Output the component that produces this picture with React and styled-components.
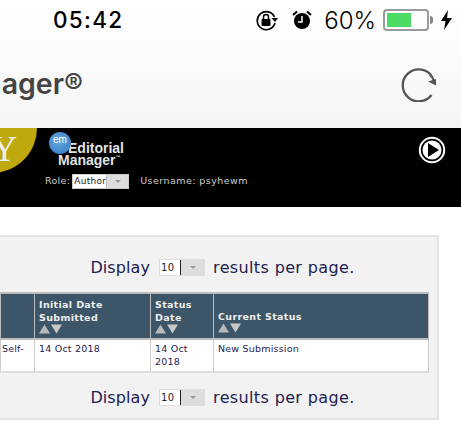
import React from "react";
import styled, { createGlobalStyle } from "styled-components";

const Global = createGlobalStyle`
  html, body { margin: 0; padding: 0; background: #fff; }
  body { width: 461px; height: 424px; overflow: hidden; font-family: "DejaVu Sans", Verdana, sans-serif; }
`;
const Page = styled.div`width: 461px; height: 424px; overflow: hidden; display: flex; flex-direction: column; background: #fff;`;
const Chrome = styled.header`
  height: 128px; flex: none; display: flex; flex-direction: column;
  background: linear-gradient(#ffffff 0%, #fbfbfb 45%, #f5f5f5 100%);
`;
const StatusBar = styled.div`
  height: 40px; display: flex; align-items: center; justify-content: space-between;
  padding: 0 9px 0 53px; color: #000; font-family: Inter, "Liberation Sans", sans-serif;
`;
const Clock = styled.span`font-size: 22.5px; font-weight: 500; letter-spacing: 1.3px; line-height: 40px;`;
const StatusIcons = styled.div`display: flex; align-items: center;`;
const Percent = styled.span`font-size: 24px; font-weight: 300; margin: 0 7px 0 12px; font-family: Inter, sans-serif;`;
const Battery = styled.div`
  position: relative; width: 46px; height: 22px; border: 2px solid #999; border-radius: 4px; padding: 2px; margin-right: 3px; box-sizing: border-box;
  &::after { content: ""; position: absolute; right: -6px; top: 5px; width: 3px; height: 8px; background: #888; border-radius: 0 3px 3px 0; }
`;
const BatteryFill = styled.div`width: 24px; height: 100%; background: #4cd964;`;
const IconSlot = styled.svg`display: block; flex: none; margin-left: ${p => p.$ml || 0}px;`;
const NavBar = styled.div`flex: 1; display: flex; align-items: flex-start; justify-content: space-between; padding-right: 24px; min-height: 0;`;
const TitleClip = styled.div`
  width: 83px; overflow: hidden; display: flex; justify-content: flex-end; margin-top: 26px;
`;
const Title = styled.span`
  font-family: Inter, "Liberation Sans", sans-serif; font-size: 28.5px; font-weight: 600; color: #444; white-space: nowrap; line-height: 36px;
`;
const Reload = styled.svg`display: block; margin-top: 26px;`;
const Banner = styled.div`position: relative; height: 79px; box-sizing: border-box; overflow: hidden; background: #000; padding: 4px 0 0 45px; flex: none;`;
const Seal = styled.div`
  position: absolute; left: -53px; top: -45px; width: 90px; height: 90px; border-radius: 50%; background: #bfa80d;
  display: flex; align-items: flex-end; justify-content: flex-end; padding: 0 20px 6px 0; box-sizing: border-box;
  color: #eee; font: 35px/1 "Liberation Serif", serif;
`;
const Logo = styled.div`position: relative; height: 40px; color: #e2e2e2; font: bold 14px/12px "Liberation Sans", sans-serif;`;
const LogoBall = styled.div`
  position: absolute; left: 4px; top: 0; width: 22px; height: 22px; border-radius: 50%;
  background: radial-gradient(circle at 45% 40%, #66a9e0, #2f78c4);
  color: #fff; font: 10px/15px "Liberation Sans", sans-serif; text-align: center;
`;
const LogoLines = styled.div`
  padding: 10px 0 0 13px;
  & > div:first-child { padding-left: 10px; }
  sup { font-size: 5px; line-height: 0; vertical-align: 6px; }
`;
const RoleRow = styled.div`display: flex; align-items: center; height: 16px; font-size: 9.5px; letter-spacing: .3px; color: #ccc;`;
const Username = styled.span`margin-left: 11px; letter-spacing: .45px;`;
const Select = styled.div`
  display: flex; align-items: stretch; background: #fff; box-sizing: border-box; color: #222; flex: none;
  width: ${p => p.$w}px; height: ${p => p.$h}px; margin: ${p => p.$m || 0};
  border: 1px solid ${p => p.$dark ? "#ddd" : "#ccc"};
  font-size: ${p => p.$fs}px; line-height: ${p => p.$h - 2}px;
`;
const SelectValue = styled.span`flex: 1; padding-left: 1px;`;
const SelectArrow = styled.span`
  width: ${p => p.$w}px; background: #ddd; display: flex; align-items: center; justify-content: center; border-left: ${p => p.$bar ? "1px solid #222" : "1px solid #bbb"};
  &::after { content: ""; border: 3.5px solid transparent; border-top: 3.5px solid #999; border-bottom: 0; }
`;
const PlayBtn = styled.svg`position: absolute; right: 15px; top: 8px;`;
const Gap = styled.div`height: 28px; flex: none;`;
const Panel = styled.section`
  width: 439px; height: 185px; box-sizing: border-box; flex: none; background: #f2f2f2;
  border: 2px solid #e4e4e4; border-left: 0; display: flex; flex-direction: column; align-items: center;
`;
const Pager = styled.div`
  width: 428px; height: ${p => p.$h}px; display: flex; align-items: center; justify-content: center; align-self: flex-start; flex: none;
  font-size: 16px; color: #1c2150; letter-spacing: .36px; padding: ${p => p.$top || 0}px 0 0 17px; box-sizing: border-box;
`;
const PagerLabel = styled.span`letter-spacing: .1px;`;
const TableWrap = styled.table`
  width: 428px; table-layout: fixed; border-collapse: collapse; align-self: flex-start; flex: none; font-size: 9.5px; background: #fff; color: #1c2150;
`;
const HeadCell = styled.th`
  background: #3c5568; color: #eee; font-size: 9.5px; font-weight: bold; text-align: left; vertical-align: top; letter-spacing: .35px;
  border: 1px solid #bbb; border-top: 2px solid #bbb; border-bottom: 2px solid #bbb; padding: ${p => p.$pad ? 16 : 4}px 0 0 4px; line-height: 13px; height: 46px; box-sizing: border-box;
`;
const Cell = styled.td`
  border: 1px solid #ccc; border-bottom: 2px solid #ddd; padding: ${p => p.$first ? "2px 0 0 1px" : "2px 0 0 4px"}; vertical-align: top; line-height: 13px; height: 33px; box-sizing: border-box; letter-spacing: .2px;
`;
const Sorts = styled.svg`display: block;`;

const Arrows = () => (
  <Sorts width="24" height="10" viewBox="0 0 24 10">
    <polygon points="0,9.5 5.5,0.5 11,9.5" fill="#b9b9b9" />
    <polygon points="12,0.5 23,0.5 17.5,9.5" fill="#c8c8c8" />
  </Sorts>
);
const DisplayPager = ({ h, top }) => (
  <Pager $h={h} $top={top}>
    <PagerLabel>Display</PagerLabel>
    <Select $w={46} $h={17} $fs={10} $m="0 8px 0 9px" $dark>
      <SelectValue>10</SelectValue>
      <SelectArrow $w={23} $bar />
    </Select>
    results per page.
  </Pager>
);

export default function App() {
  return (
    <Page>
      <Global />
      <Chrome>
        <StatusBar>
          <Clock>05:42</Clock>
          <StatusIcons>
            <IconSlot width="23" height="22" viewBox="0 0 23 22">
              <path d="M20 14 A9 9 0 1 1 19.5 8" fill="none" stroke="#000" strokeWidth="1.7" />
              <polygon points="16.5,9 23,9 20,13" fill="#000" />
              <rect x="6.5" y="10" width="9" height="7" rx="1" fill="#000" />
              <path d="M8.5 10 V8 a2.5 2.5 0 0 1 5 0 V10" fill="none" stroke="#000" strokeWidth="1.5" />
            </IconSlot>
            <IconSlot width="20" height="20" viewBox="0 0 20 20" $ml={14}>
              <circle cx="10" cy="11" r="8" fill="#000" />
              <path d="M10 6 V12 H6" fill="none" stroke="#fff" strokeWidth="1.5" />
              <path d="M1 5 L5 1.5 M19 5 L15 1.5" stroke="#000" strokeWidth="2.2" />
            </IconSlot>
            <Percent>60%</Percent>
            <Battery><BatteryFill /></Battery>
            <IconSlot width="11" height="20" viewBox="0 0 11 20" $ml={9}>
              <polygon points="7,0 0,11 4.5,11 3,20 11,8 6,8" fill="#000" />
            </IconSlot>
          </StatusIcons>
        </StatusBar>
        <NavBar>
          <TitleClip><Title>Editorial Manager®</Title></TitleClip>
          <Reload width="36" height="36" viewBox="0 0 36 36">
            <path d="M30 9 A16 16 0 1 0 30.5 29" fill="none" stroke="#555" strokeWidth="2.3" />
            <polygon points="27,15.5 35,13 35,19.5" fill="#555" />
            <path d="M29 8.5 Q31.5 10.5 33 15" fill="none" stroke="#555" strokeWidth="2.3" />
          </Reload>
        </NavBar>
      </Chrome>
      <Banner>
        <Seal>Y</Seal>
        <Logo>
          <LogoBall>em</LogoBall>
          <LogoLines>
            <div>Editorial</div>
            <div>Manager<sup>™</sup></div>
          </LogoLines>
        </Logo>
        <RoleRow>
          Role:
          <Select $w={57} $h={15} $fs={9} $m="3px 0 0 2px">
            <SelectValue>Author</SelectValue>
            <SelectArrow $w={22} />
          </Select>
          <Username>Username: psyhewm</Username>
        </RoleRow>
        <PlayBtn width="28" height="28" viewBox="0 0 28 28">
          <circle cx="14" cy="14" r="12.2" fill="none" stroke="#fff" strokeWidth="2" />
          <circle cx="14" cy="14" r="9.5" fill="#fff" />
          <polygon points="10,7 21,14 10,21" fill="#000" />
        </PlayBtn>
      </Banner>
      <Gap />
      <Panel>
        <DisplayPager h={55} top={5} />
        <TableWrap>
          <colgroup>
            <col style={{ width: 34 }} /><col style={{ width: 116 }} /><col style={{ width: 63 }} /><col style={{ width: 215 }} />
          </colgroup>
          <thead>
            <tr>
              <HeadCell />
              <HeadCell>Initial Date<br />Submitted<Arrows /></HeadCell>
              <HeadCell>Status<br />Date<Arrows /></HeadCell>
              <HeadCell $pad>Current Status<Arrows /></HeadCell>
            </tr>
          </thead>
          <tbody>
            <tr>
              <Cell $first>Self-</Cell>
              <Cell>14 Oct 2018</Cell>
              <Cell>14 Oct<br />2018</Cell>
              <Cell>New Submission</Cell>
            </tr>
          </tbody>
        </TableWrap>
        <DisplayPager h={49} />
      </Panel>
    </Page>
  );
}
